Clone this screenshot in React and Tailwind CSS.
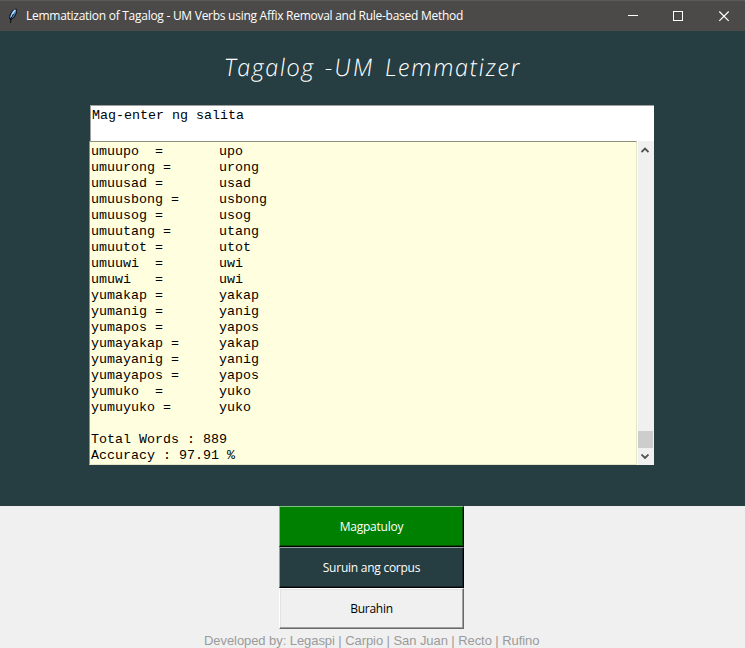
import React from "react";

const rows = [
  ["umuupo  =", "upo"],
  ["umuurong =", "urong"],
  ["umuusad =", "usad"],
  ["umuusbong =", "usbong"],
  ["umuusog =", "usog"],
  ["umuutang =", "utang"],
  ["umuutot =", "utot"],
  ["umuuwi  =", "uwi"],
  ["umuwi   =", "uwi"],
  ["yumakap =", "yakap"],
  ["yumanig =", "yanig"],
  ["yumapos =", "yapos"],
  ["yumayakap =", "yakap"],
  ["yumayanig =", "yanig"],
  ["yumayapos =", "yapos"],
  ["yumuko  =", "yuko"],
  ["yumuyuko =", "yuko"],
];

function Feather() {
  return (
    <svg width="10" height="16" viewBox="0 0 10 16" className="ml-[8px] shrink-0">
      <path d="M7.5 0.5 L9 1.5 L8.7 5.5 L6.5 9.5 L3.2 12 L1.2 11 L1.5 7 L4.2 2.5 Z" fill="#10141c" />
      <path d="M7.3 1.2 L8.2 2.2 L7.8 5 L5.6 9 L3.4 10.8 L2.2 9.8 L2.6 7 L4.8 3 Z" fill="#4a86cc" />
      <path d="M7.2 1.8 L4.8 5.2 L3 9.5" stroke="#c4e2fa" strokeWidth="1.4" fill="none" />
      <path d="M5.5 6 L3 10.5 L2.5 15" stroke="#0a0a0a" strokeWidth="1" fill="none" />
    </svg>
  );
}

function TitleBar() {
  return (
    <div className="flex h-[31px] shrink-0 items-center border-t border-[#5c5b59] bg-[#4c4a48]">
      <Feather />
      <span className="ml-[8px] whitespace-pre font-['Open_Sans',sans-serif] text-[12px] leading-[16px] tracking-[-0.27px] text-white">
        Lemmatization of Tagalog - UM Verbs using Affix Removal and Rule-based Method
      </span>
      <svg width="102" height="11" viewBox="0 0 102 11" className="mr-[15px] ml-auto shrink-0" fill="none" stroke="#fff">
        <path d="M0 4.5H10" shapeRendering="crispEdges" />
        <rect x="45.5" y="0.5" width="9" height="9" shapeRendering="crispEdges" />
        <path d="M91.3 0.5L100.7 9.9M100.7 0.5L91.3 9.9" strokeWidth="1.2" />
      </svg>
    </div>
  );
}

function ScrollBar() {
  return (
    <div className="flex w-[17px] shrink-0 flex-col items-start border-l border-white bg-[#f0f0f0] pt-[6px] pb-[3px]">
      <svg width="8" height="6" viewBox="0 0 8 6" className="ml-[3px]" fill="none" stroke="#505050" strokeWidth="1.8">
        <path d="M0.5 5L4 1.5L7.5 5" />
      </svg>
      <div className="mt-auto h-[17px] w-[15px] bg-[#cdcdcd]" />
      <svg width="8" height="6" viewBox="0 0 8 6" className="mt-[6px] mb-[2px] ml-[3px]" fill="none" stroke="#505050" strokeWidth="1.8">
        <path d="M0.5 0.5L4 4L7.5 0.5" />
      </svg>
    </div>
  );
}

export default function App() {
  return (
    <div className="flex h-[648px] w-[745px] flex-col overflow-hidden bg-[#f0f0f0]">
      <TitleBar />
      <main className="flex h-[475px] shrink-0 flex-col bg-[#263d42]">
        <h1 className="mt-[20px] ml-[224px] flex h-[32px] w-[297px] skew-x-[4deg] justify-between font-['Open_Sans',sans-serif] text-[24px] leading-[32px] font-light text-white italic">
          <span className="tracking-[1.2px]">Tagalog</span>
          <span className="tracking-[2px]">-UM</span>
          <span className="tracking-[1.4px]">Lemmatizer</span>
        </h1>
        <div className="mt-[22px] ml-[90px] h-[36px] w-[564px] border-t border-l border-[#a0a0a0] bg-white pt-[2px] pl-px font-['Liberation_Mono',monospace] text-[13.333px] leading-[16px] text-black">
          Mag-enter ng salita
        </div>
        <div className="ml-[89px] flex h-[324px] w-[565px]">
          <div className="w-[548px] shrink-0 border border-t-[#8f8f7e] border-r-[#e5e5c8] border-b-[#e5e5c8] border-l-[#8f8f7e] bg-[#ffffdf] pt-[2px] pl-[1px] font-['Liberation_Mono',monospace] text-[13.333px] leading-[16px] text-black">
            {rows.map(([word, root]) => (
              <div key={word} className="flex h-[16px] whitespace-pre">
                <span className="w-[128px]">{word}</span>
                <span>{root}</span>
              </div>
            ))}
            <div className="mt-[16px] h-[16px]">Total Words : 889</div>
            <div className="h-[16px]">Accuracy : 97.91 %</div>
          </div>
          <ScrollBar />
        </div>
      </main>
      <div className="ml-[279px] flex w-[185px] shrink-0 flex-col font-['Open_Sans',sans-serif] text-[12px] leading-[16px] tracking-[-0.25px]">
        <button className="h-[41px] border border-t-[#7fbf7f] border-r-black border-b-black border-l-[#7fbf7f] bg-[#008000] text-white shadow-[inset_-1px_-1px_0_#005000]">
          Magpatuloy
        </button>
        <button className="h-[41px] border border-t-[#929ea0] border-r-black border-b-black border-l-[#929ea0] bg-[#263d42] text-white shadow-[inset_-1px_-1px_0_#17262a]">
          Suruin ang corpus
        </button>
        <button className="h-[41px] border border-t-white border-r-[#696969] border-b-[#696969] border-l-white bg-[#f0f0f0] text-black shadow-[inset_-1px_-1px_0_#a0a0a0,inset_1px_1px_0_#e3e3e3]">
          Burahin
        </button>
      </div>
      <footer className="mt-[4px] ml-[204px] whitespace-pre font-['Liberation_Sans',sans-serif] text-[13px] leading-[16px] tracking-[-0.07px] text-[#9b9b9b]">
        Developed by: Legaspi | Carpio | San Juan | Recto | Rufino
      </footer>
    </div>
  );
}
